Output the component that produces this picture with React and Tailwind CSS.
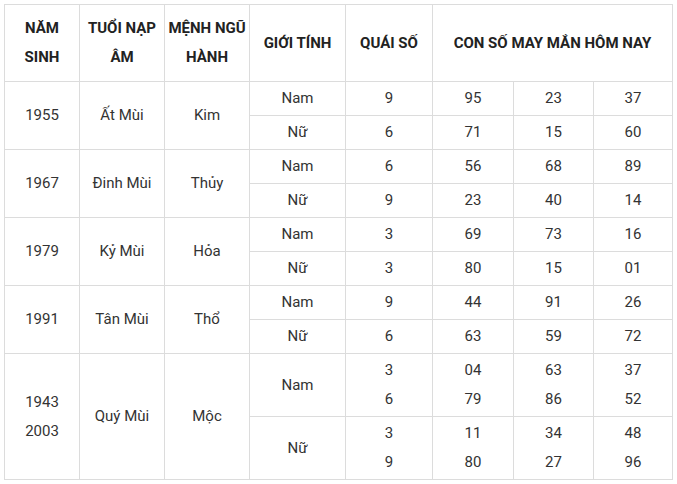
import React from 'react';

const groups = [
  { year: ['1955'], tuoi: 'Ất Mùi', menh: 'Kim', rows: [
    { g: 'Nam', q: ['9'], n: [['95', '23', '37']] },
    { g: 'Nữ', q: ['6'], n: [['71', '15', '60']] },
  ] },
  { year: ['1967'], tuoi: 'Đinh Mùi', menh: 'Thủy', rows: [
    { g: 'Nam', q: ['6'], n: [['56', '68', '89']] },
    { g: 'Nữ', q: ['9'], n: [['23', '40', '14']] },
  ] },
  { year: ['1979'], tuoi: 'Kỷ Mùi', menh: 'Hỏa', rows: [
    { g: 'Nam', q: ['3'], n: [['69', '73', '16']] },
    { g: 'Nữ', q: ['3'], n: [['80', '15', '01']] },
  ] },
  { year: ['1991'], tuoi: 'Tân Mùi', menh: 'Thổ', rows: [
    { g: 'Nam', q: ['9'], n: [['44', '91', '26']] },
    { g: 'Nữ', q: ['6'], n: [['63', '59', '72']] },
  ] },
  { year: ['1943', '2003'], tuoi: 'Quý Mùi', menh: 'Mộc', rows: [
    { g: 'Nam', q: ['3', '6'], n: [['04', '63', '37'], ['79', '86', '52']] },
    { g: 'Nữ', q: ['3', '9'], n: [['11', '34', '48'], ['80', '27', '96']] },
  ] },
];

const cell = 'border border-[#dcdcdc] text-center align-middle p-0';

function Lines({ items }) {
  return items.map((t, i) => <div key={i} className="leading-[29px]">{t}</div>);
}

export default function App() {
  return (
    <div className="bg-white w-[677px] h-[484px] pt-[4px] pl-[4px]" style={{ fontFamily: 'Roboto, "Liberation Sans", sans-serif' }}>
      <table className="border-collapse table-fixed w-[668px] text-[15px] text-[#333]">
        <colgroup>
          <col className="w-[75px]" />
          <col className="w-[85px]" />
          <col className="w-[85px]" />
          <col className="w-[96px]" />
          <col className="w-[87px]" />
          <col className="w-[81px]" />
          <col className="w-[80px]" />
          <col className="w-[79px]" />
        </colgroup>
        <thead>
          <tr className="h-[77px] font-bold text-[#222]">
            <th className={cell}><div className="leading-[29px]">NĂM<br />SINH</div></th>
            <th className={cell}><div className="leading-[29px]">TUỔI NẠP<br />ÂM</div></th>
            <th className={cell}><div className="leading-[29px]">MỆNH NGŨ<br />HÀNH</div></th>
            <th className={cell}>GIỚI TÍNH</th>
            <th className={cell}>QUÁI SỐ</th>
            <th className={cell} colSpan={3}>CON SỐ MAY MẮN HÔM NAY</th>
          </tr>
        </thead>
        <tbody>
          {groups.map((grp, gi) =>
            grp.rows.map((r, ri) => {
              const h = r.q.length > 1 ? 'h-[63px]' : 'h-[34px]';
              return (
                <tr key={`${gi}-${ri}`} className={h}>
                  {ri === 0 && (
                    <>
                      <td className={cell} rowSpan={grp.rows.length}><Lines items={grp.year} /></td>
                      <td className={cell} rowSpan={grp.rows.length}>{grp.tuoi}</td>
                      <td className={cell} rowSpan={grp.rows.length}>{grp.menh}</td>
                    </>
                  )}
                  <td className={cell}>{r.g}</td>
                  <td className={cell}><Lines items={r.q} /></td>
                  {[0, 1, 2].map(k => (
                    <td key={k} className={cell}><Lines items={r.n.map(x => x[k])} /></td>
                  ))}
                </tr>
              );
            })
          )}
        </tbody>
      </table>
    </div>
  );
}
